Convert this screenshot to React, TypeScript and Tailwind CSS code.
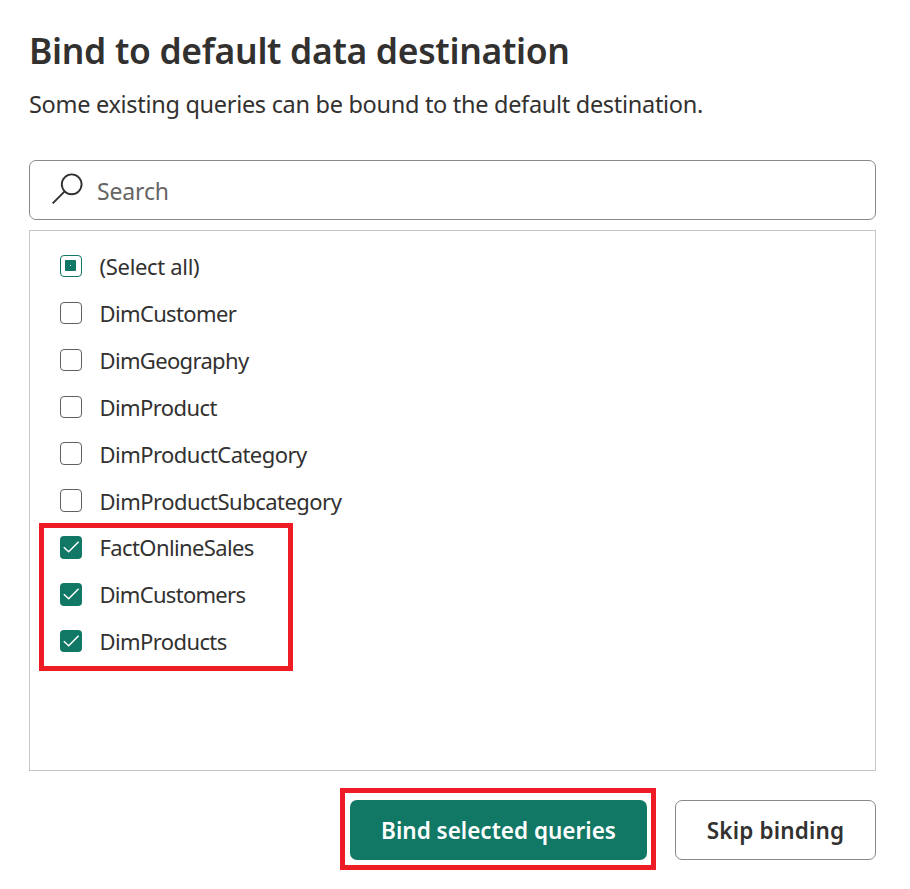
type State = "mixed" | "on" | "off";

const rows: { label: string; state: State; height: string; spacing: string }[] = [
  { label: "(Select all)", state: "mixed", height: "h-[22px]", spacing: "tracking-[-0.32px]" },
  { label: "DimCustomer", state: "off", height: "h-[22px]", spacing: "tracking-[-0.64px]" },
  { label: "DimGeography", state: "off", height: "h-[22px]", spacing: "tracking-[-0.66px]" },
  { label: "DimProduct", state: "off", height: "h-[22px]", spacing: "tracking-[-0.58px]" },
  { label: "DimProductCategory", state: "off", height: "h-[23px]", spacing: "tracking-[-0.54px]" },
  { label: "DimProductSubcategory", state: "off", height: "h-[23px]", spacing: "tracking-[-0.52px]" },
  { label: "FactOnlineSales", state: "on", height: "h-[23px]", spacing: "tracking-[-0.61px]" },
  { label: "DimCustomers", state: "on", height: "h-[23px]", spacing: "tracking-[-0.7px]" },
  { label: "DimProducts", state: "on", height: "h-[22px]", spacing: "tracking-[-0.6px]" },
];

function Box({ state, height }: { state: State; height: string }) {
  if (state === "on") {
    return (
      <span className={`mb-[2px] flex w-[22px] shrink-0 items-start justify-center rounded-[4px] bg-[#117865] ${height}`}>
        <svg className="shrink-0" width="22" height="22" viewBox="0 0 22 22" fill="none" stroke="#fff" strokeWidth="1.5">
          <path d="M3.8 11.2 8.7 15.8 18.6 5.7" />
        </svg>
      </span>
    );
  }
  if (state === "mixed") {
    return (
      <span className={`mb-[2px] flex w-[22px] shrink-0 items-center justify-center rounded-[4px] border border-[#117865] ${height}`}>
        <span className="mr-px mb-px flex h-[11px] w-[11px] items-center justify-center rounded-[1px] bg-[#117865]">
          <span className="h-px w-px bg-white" />
        </span>
      </span>
    );
  }
  return <span className={`mb-[2px] w-[22px] shrink-0 rounded-[4px] border border-[#616161] ${height}`} />;
}

export default function App() {
  return (
    <main className="flex h-[889px] w-[910px] flex-col bg-white pr-[34px] pl-[29px] font-['Noto_Sans','Open_Sans',sans-serif] text-[#323130]">
      <h1 className="mt-[25px] h-[50px] text-[35.5px] leading-[50px] font-semibold tracking-[-0.33px] whitespace-nowrap">
        Bind to default data destination
      </h1>
      <p className="mt-[13px] h-8 text-[23.5px] leading-8 tracking-[-0.3px] whitespace-nowrap">
        Some existing queries can be bound to the default destination.
      </p>

      <label className="mt-[40px] flex h-[60px] shrink-0 items-center rounded-[7px] border border-[#8a8886] pl-[22px]">
        <svg className="mb-[2px] shrink-0" width="32" height="32" viewBox="0 0 32 32" fill="none" stroke="#323130" strokeWidth="1.9">
          <circle cx="19.7" cy="11.3" r="9.9" />
          <path d="M12.7 18.3 0.7 30.3" />
        </svg>
        <span className="mt-[2px] ml-[13px] text-[23px] leading-8 tracking-[-0.15px] text-[#666564]">Search</span>
      </label>

      <section className="relative mt-[10px] h-[541px] shrink-0 border border-[#c8c6c4] pt-[12.5px] pl-[30px]">
        {rows.map((row) => (
          <div key={row.label} className="flex h-[46.88px] items-center">
            <Box state={row.state} height={row.height} />
            <span className={`mb-[1.5px] ml-[17.5px] text-[22px] leading-8 whitespace-nowrap ${row.spacing}`}>{row.label}</span>
          </div>
        ))}
        <div className="absolute top-[292px] left-[9px] h-[148px] w-[254px] border-[5px] border-[#ee1c25]" />
      </section>

      <footer className="mt-[17px] flex items-start justify-end gap-[19px]">
        <div className="flex h-[82px] w-[316px] items-start border-[5px] border-[#ee1c25] pt-[7px] pl-[5px]">
          <button className="h-[60px] w-[297px] rounded-[7px] bg-[#117865] pt-[2px] text-[22.5px] font-semibold whitespace-nowrap text-white">
            Bind selected queries
          </button>
        </div>
        <button className="mt-3 h-[60px] w-[201px] rounded-[7px] border border-[#8a8886] pt-[2px] text-[22.5px] font-semibold tracking-[0.15px] whitespace-nowrap">
          Skip binding
        </button>
      </footer>
    </main>
  );
}
